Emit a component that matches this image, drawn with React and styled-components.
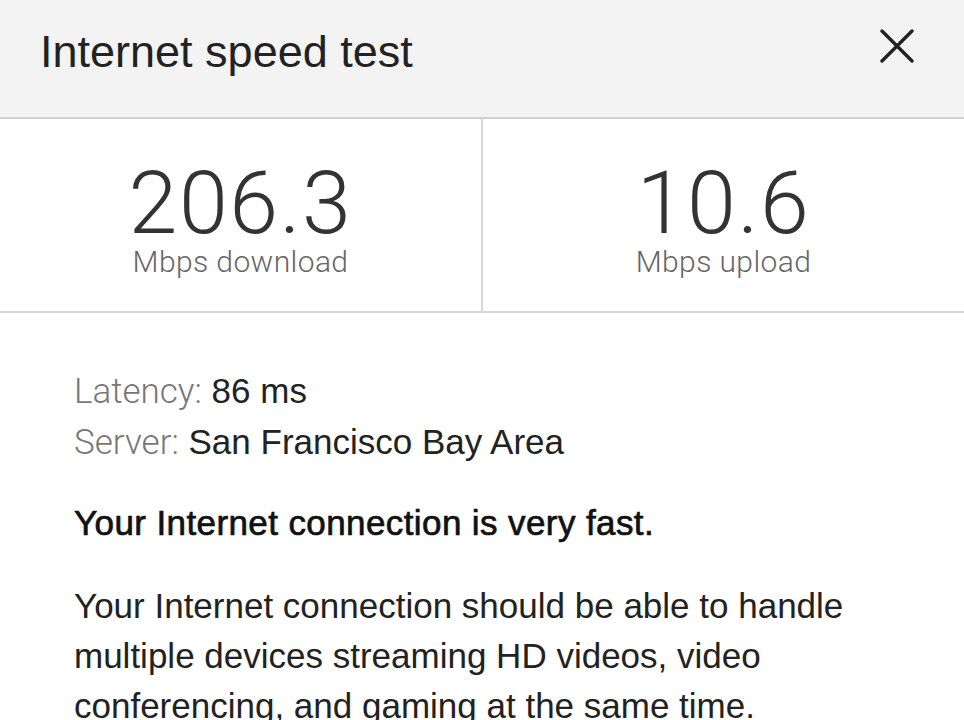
import React from "react";
import styled, { createGlobalStyle } from "styled-components";

const GlobalStyle = createGlobalStyle`
  body {
    margin: 0;
    background: #fff;
    font-family: "Liberation Sans", Arial, sans-serif;
  }
`;

const stats = [
  { value: "206.3", label: "Mbps download" },
  { value: "10.6", label: "Mbps upload" },
];

const CloseIcon = () => (
  <svg width="34" height="34" viewBox="0 0 34 34">
    <path
      d="M2 2 L32 32 M32 2 L2 32"
      stroke="#222"
      strokeWidth="3.4"
      strokeLinecap="round"
      fill="none"
    />
  </svg>
);

const App = () => {
  return (
    <Wrapper>
      <GlobalStyle />
      <Header>
        <Title>Internet speed test</Title>
        <CloseButton aria-label="Close">
          <CloseIcon />
        </CloseButton>
      </Header>

      <StatsRow>
        {stats.map((s) => (
          <Stat key={s.label}>
            <StatValue>{s.value}</StatValue>
            <StatLabel>{s.label}</StatLabel>
          </Stat>
        ))}
      </StatsRow>

      <Body>
        <InfoLine>
          <span className="key">Latency:</span> 86 ms
        </InfoLine>
        <InfoLine>
          <span className="key">Server:</span> San Francisco Bay Area
        </InfoLine>
        <Verdict>Your Internet connection is very fast.</Verdict>
        <Description>
          Your Internet connection should be able to handle multiple devices
          streaming HD videos, video conferencing, and gaming at the same time.
        </Description>
      </Body>
    </Wrapper>
  );
};

const Wrapper = styled.div`
  width: 964px;
  height: 720px;
  overflow: hidden;
  background: #fff;
`;

const Header = styled.header`
  height: 119px;
  box-sizing: border-box;
  background: #f3f3f3;
  border-bottom: 2px solid #cfcfcf;
  display: flex;
  align-items: flex-start;
  justify-content: space-between;
  padding: 26px 50px 0 40px;
`;

const Title = styled.h1`
  margin: 0;
  font-size: 45px;
  line-height: 52px;
  font-weight: 400;
  color: #222;
`;

const CloseButton = styled.button`
  border: none;
  background: none;
  padding: 0;
  margin-top: 3px;
  display: flex;
  cursor: pointer;
`;

const StatsRow = styled.section`
  display: grid;
  grid-template-columns: 481px 1fr;
  height: 194px;
  box-sizing: border-box;
  border-bottom: 2px solid #d6d6d6;
`;

const Stat = styled.div`
  display: flex;
  flex-direction: column;
  align-items: center;
  padding-top: 44px;

  & + & {
    border-left: 2px solid #d6d6d6;
  }
`;

const StatValue = styled.div`
  font-family: Roboto, "Liberation Sans", sans-serif;
  font-weight: 300;
  font-size: 88px;
  line-height: 80px;
  color: #333;
  letter-spacing: 1.5px;
`;

const StatLabel = styled.div`
  font-family: Roboto, "Liberation Sans", sans-serif;
  font-weight: 300;
  font-size: 30px;
  line-height: 34px;
  margin-top: 2px;
  color: #666;
  letter-spacing: 0.4px;
`;

const Body = styled.section`
  padding: 53px 74px 0;
`;

const InfoLine = styled.div`
  font-size: 35px;
  line-height: 50px;
  color: #222;

  .key {
    font-family: Roboto, "Liberation Sans", sans-serif;
    font-weight: 300;
    color: #777;
  }
`;

const Verdict = styled.p`
  margin: 30px 0 0;
  font-size: 35px;
  line-height: 50px;
  font-weight: 400;
  letter-spacing: 0.4px;
  -webkit-text-stroke: 0.7px #111;
  color: #111;
`;

const Description = styled.p`
  margin: 33px 0 0;
  font-size: 35px;
  line-height: 50px;
  color: #222;
  max-width: 790px;
`;

export default App;
